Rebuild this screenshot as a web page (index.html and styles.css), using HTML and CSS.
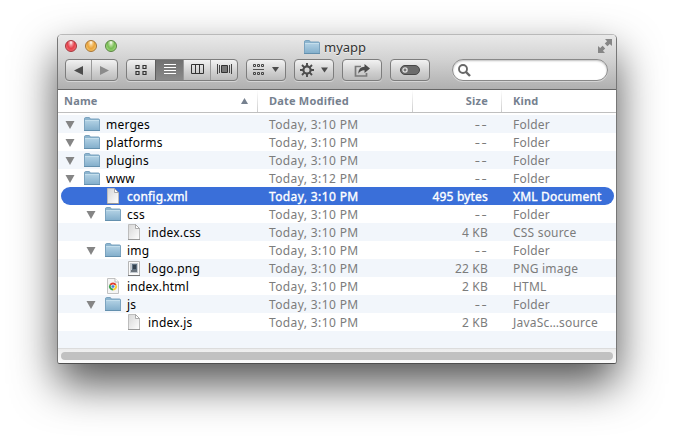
FILE: index.html
```
<!DOCTYPE html>
<html lang="en">
<head>
<meta charset="utf-8">
<title>myapp</title>
<link rel="stylesheet" href="styles.css">
</head>
<body>
<svg class="defs" width="0" height="0">
  <defs>
    <linearGradient id="gf" x1="0" y1="0" x2="0" y2="1"><stop offset="0" stop-color="#b3d2e5"/><stop offset="1" stop-color="#82aecb"/></linearGradient>
    <linearGradient id="gd" x1="0" y1="0" x2="1" y2="1"><stop offset="0" stop-color="#d6d6d6"/><stop offset="1" stop-color="#fff"/></linearGradient>
    <symbol id="folder" viewBox="0 0 16 15">
      <path d="M.5 13.5V2Q.5.5 1.5.5H5Q6 .5 6.2 2H14.5Q15.5 2 15.5 3V13.5Z" fill="#8db5cf" stroke="#7ba3bf"/>
      <path d="M1 3H15V13.5H1Z" fill="url(#gf)"/><path d="M1 3.5H15" stroke="#c4deec"/><path d="M0 13.5H16" stroke="#6490ae"/>
    </symbol>
    <symbol id="doc" viewBox="0 0 12 16">
      <path d="M.5.5H7.5L11.5 4.5V15.5H.5Z" fill="url(#gd)" stroke="#bdbdbd"/>
      <path d="M7.5.5V4.5H11.5Z" fill="#fff" stroke="#999" stroke-width=".8"/><path d="M0 15.5H12" stroke="#999"/>
    </symbol>
    <symbol id="image" viewBox="0 0 12 16">
      <path d="M.5 1.5H11.5V15.5H.5Z" fill="#fafafa" stroke="#b5b5b5"/><path d="M0 15.5H12" stroke="#777"/>
      <path d="M2 3H10V13H2Z" fill="#c4cad0"/><path d="M4 4H9V10H4Z" fill="#5d7080"/><path d="M5 5H8V9H5Z" fill="#34424f"/><path d="M3 10H9V12H3Z" fill="#6a737c"/>
    </symbol>
    <symbol id="html" viewBox="0 0 12 16">
      <path d="M.5.5H8L11.5 4V15.5H.5Z" fill="#f5f5f5" stroke="#c2c2c2"/><path d="M8 .5V4H11.5" fill="#fff" stroke="#aaa" stroke-width=".8"/>
      <path d="M6 8.5L2.5 6.5A4 4 0 0 1 9.5 6.5Z" fill="#de3a2c"/>
      <path d="M6 8.5L2.5 6.5A4 4 0 0 0 6 12.5Z" fill="#37a34a"/>
      <path d="M6 8.5V12.5A4 4 0 0 0 9.5 6.5Z" fill="#f7cf34"/>
      <circle cx="6" cy="8.5" r="1.8" fill="#3d7fdc" stroke="#fff" stroke-width=".7"/>
    </symbol>
    <symbol id="tri" viewBox="0 0 10 8"><path d="M.5 0H9.5L5 8Z" fill="#858585"/></symbol>
  </defs>
</svg>
<main class="window">
  <header class="chrome">
    <div class="titlebar">
      <div class="lights"><i class="light red"></i><i class="light yellow"></i><i class="light green"></i></div>
      <div class="title"><svg class="folder"><use href="#folder"/></svg><span>myapp</span></div>
      <svg class="fullscreen" viewBox="0 0 14 14"><path d="M7 0H14V7L11.8 4.9L9.4 7.2L6.8 4.6L9.1 2.2ZM0 7L2.2 9.1L4.6 6.8L7.2 9.4L4.9 11.8L7 14H0Z" fill="#868686"/></svg>
    </div>
    <div class="toolbar">
      <div class="group nav">
        <span class="seg"><svg width="9" height="9"><path d="M9 0V9L0 4.5Z" fill="#4c4c4c"/></svg></span>
        <span class="seg"><svg width="9" height="9"><path d="M0 0V9L9 4.5Z" fill="#8b8b8b"/></svg></span>
      </div>
      <div class="group views">
        <span class="seg"><svg width="12" height="11" fill="none" stroke="#333"><path d="M1 1.5H4V4.5H1ZM8 1.5H11V4.5H8ZM1 7.5H4V10.5H1ZM8 7.5H11V10.5H8Z" stroke-width="1.2"/></svg></span>
        <span class="seg on"><svg width="12" height="11" stroke="#fff"><path d="M0 .5H12M0 3.5H12M0 6.5H12M0 9.5H12"/></svg></span>
        <span class="seg"><svg width="13" height="11" fill="none" stroke="#333"><path d="M.5.5H12.5V9.5H.5ZM4.5 0V10M8.5 0V10"/></svg></span>
        <span class="seg"><svg width="15" height="11" stroke="#444"><path d="M.5 0V10M2.5 1V9M12.5 1V9M14.5 0V10"/><path d="M4.5 1.5H10.5V8.5H4.5Z" fill="#777" stroke="#333"/></svg></span>
      </div>
      <div class="group btn"><svg width="26" height="12"><path d="M.5.5H2.5V2.5H.5ZM4.5.5H6.5V2.5H4.5ZM8.5.5H10.5V2.5H8.5ZM.5 8.5H2.5V10.5H.5ZM4.5 8.5H6.5V10.5H4.5ZM8.5 8.5H10.5V10.5H8.5Z" fill="none" stroke="#444"/><path d="M0 5.5H11" stroke="#555"/><path d="M19 3H26L22.5 8Z" fill="#4c4c4c"/></svg></div>
      <div class="group btn"><svg width="28" height="14"><g stroke="#4c4c4c" fill="none"><circle cx="7" cy="7" r="3.6" stroke-width="2.2"/><path d="M7 0V3M7 11V14M0 7H3M11 7H14M2 2L4.3 4.3M9.7 9.7L12 12M12 2L9.7 4.3M4.3 9.7L2 12" stroke-width="1.9"/></g><path d="M21 4.5H28L24.5 9.5Z" fill="#4c4c4c"/></svg></div>
      <div class="group btn"><svg width="16" height="13"><path d="M7 2.5H1.5V12H12.5V9" fill="none" stroke="#7a7a7a" stroke-width="1.7"/><path d="M10.5 0L16 4.5L10.5 9V6.2Q6.5 6 4.3 9.7Q4.4 3 10.5 2.8Z" fill="#4c4c4c"/></svg></div>
      <div class="group btn"><svg width="20" height="10"><rect x=".5" y=".5" width="19" height="9" rx="4.5" fill="#6c6c6c" stroke="#484848"/><circle cx="5" cy="5" r="2.1" fill="#777" stroke="#e2e2e2" stroke-width="1.3"/></svg></div>
      <div class="search"><svg width="13" height="13" fill="none" stroke="#686868"><circle cx="5" cy="5" r="4" stroke-width="1.9"/><path d="M8 8L12 12" stroke-width="2.4"/></svg></div>
    </div>
  </header>
  <div class="heads">
    <div class="h-name"><span>Name</span><svg width="7" height="6"><path d="M3.5 0L7 6H0Z" fill="#76818f"/></svg></div>
    <div class="h-date">Date Modified</div><div class="h-size">Size</div><div class="h-kind">Kind</div>
  </div>
  <div class="list">
    <div class="row"><div class="name"><svg class="tri"><use href="#tri"/></svg><svg class="folder"><use href="#folder"/></svg><span>merges</span></div><span class="date">Today, 3:10 PM</span><span class="size none">--</span><span>Folder</span></div>
    <div class="row"><div class="name"><svg class="tri"><use href="#tri"/></svg><svg class="folder"><use href="#folder"/></svg><span>platforms</span></div><span class="date">Today, 3:10 PM</span><span class="size none">--</span><span>Folder</span></div>
    <div class="row"><div class="name"><svg class="tri"><use href="#tri"/></svg><svg class="folder"><use href="#folder"/></svg><span>plugins</span></div><span class="date">Today, 3:10 PM</span><span class="size none">--</span><span>Folder</span></div>
    <div class="row"><div class="name"><svg class="tri"><use href="#tri"/></svg><svg class="folder"><use href="#folder"/></svg><span>www</span></div><span class="date">Today, 3:12 PM</span><span class="size none">--</span><span>Folder</span></div>
    <div class="row selected"><div class="name l1"><i class="tri"></i><svg class="file"><use href="#doc"/></svg><span>config.xml</span></div><span class="date">Today, 3:10 PM</span><span class="size">495 bytes</span><span>XML Document</span></div>
    <div class="row"><div class="name l1"><svg class="tri"><use href="#tri"/></svg><svg class="folder"><use href="#folder"/></svg><span>css</span></div><span class="date">Today, 3:10 PM</span><span class="size none">--</span><span>Folder</span></div>
    <div class="row"><div class="name l2"><i class="tri"></i><svg class="file"><use href="#doc"/></svg><span>index.css</span></div><span class="date">Today, 3:10 PM</span><span class="size">4 KB</span><span>CSS source</span></div>
    <div class="row"><div class="name l1"><svg class="tri"><use href="#tri"/></svg><svg class="folder"><use href="#folder"/></svg><span>img</span></div><span class="date">Today, 3:10 PM</span><span class="size none">--</span><span>Folder</span></div>
    <div class="row"><div class="name l2"><i class="tri"></i><svg class="file"><use href="#image"/></svg><span>logo.png</span></div><span class="date">Today, 3:10 PM</span><span class="size">22 KB</span><span>PNG image</span></div>
    <div class="row"><div class="name l1"><i class="tri"></i><svg class="file"><use href="#html"/></svg><span>index.html</span></div><span class="date">Today, 3:10 PM</span><span class="size">2 KB</span><span>HTML</span></div>
    <div class="row"><div class="name l1"><svg class="tri"><use href="#tri"/></svg><svg class="folder"><use href="#folder"/></svg><span>js</span></div><span class="date">Today, 3:10 PM</span><span class="size none">--</span><span>Folder</span></div>
    <div class="row"><div class="name l2"><i class="tri"></i><svg class="file"><use href="#doc"/></svg><span>index.js</span></div><span class="date">Today, 3:10 PM</span><span class="size">2 KB</span><span>JavaSc…source</span></div>
    <div class="row blank"></div>
  </div>
  <div class="scroller"><div class="thumb"></div></div>
</main>
</body>
</html>
```
FILE: styles.css
```
* { box-sizing: border-box; }
body {
  margin: 0;
  padding: 34px 57px;
  height: 442px;
  overflow: hidden;
  background: #fff;
  font: 12px/20px "Noto Sans", "Open Sans", sans-serif;
  letter-spacing: 0.2px;
}
svg { display: block; flex: none; }
.defs { position: absolute; }
.window {
  width: 560px;
  height: 330px;
  border: 1px solid;
  border-color: #b9b9b9 #777 #4e4e4e #777;
  border-radius: 5px 5px 3px 3px;
  background: #fff;
  overflow: hidden;
  display: flex;
  flex-direction: column;
  box-shadow: 0 20px 44px rgba(0, 0, 0, 0.68);
}
.chrome {
  height: 55px;
  background: linear-gradient(#e9e9e9, #d2d2d2 45%, #b0b0b0);
  border-bottom: 1px solid #666;
}
.titlebar {
  height: 24px;
  padding: 0 4px 0 7px;
  display: grid;
  grid-template-columns: 60px 1fr 14px;
  align-items: center;
}
.lights { display: flex; gap: 8px; padding-bottom: 2px; }
.light { width: 12px; height: 12px; border-radius: 50%; border: 1px solid; }
.red { background: radial-gradient(ellipse at 50% 15%, #fff 0, #f3939a 22%, #e6404a 50%, #f98a8e 100%); border-color: #a5353b; }
.yellow { background: radial-gradient(ellipse at 50% 15%, #fff 0, #f7cd85 22%, #eba33b 50%, #fbe08c 100%); border-color: #a87434; }
.green { background: radial-gradient(ellipse at 50% 15%, #fff 0, #b8dd9c 22%, #77bd53 50%, #c0ef9c 100%); border-color: #58843f; }
.title {
  display: flex;
  align-items: center;
  gap: 4px;
  padding-left: 179px;
  font-size: 13px;
  letter-spacing: 0;
  color: #333;
  text-shadow: 0 1px 0 rgba(255, 255, 255, 0.6);
}
.fullscreen { width: 14px; height: 14px; margin-bottom: 2px; }
.toolbar { display: flex; gap: 8px; padding: 0 8px 0 7px; }
.group {
  height: 22px;
  display: flex;
  border: 1px solid #7d7d7d;
  border-radius: 4px;
  background: linear-gradient(#f2f2f2, #cfcfcf 60%, #bcbcbc);
  box-shadow: 0 1px 0 rgba(255, 255, 255, 0.4);
  overflow: hidden;
}
.seg { flex: 1; display: flex; align-items: center; justify-content: center; }
.seg + .seg { border-left: 1px solid #999; }
.nav { width: 53px; }
.views { width: 112px; }
.views .seg:first-child { flex: 0 0 28px; }
.views .seg { padding-bottom: 1px; }
.views .on { flex: 0 0 28px; background: linear-gradient(#707070, #8a8a8a); border-color: #5d5d5d; }
.btn { width: 40px; align-items: center; justify-content: center; }
.search {
  margin-left: auto;
  width: 156px;
  height: 22px;
  padding-left: 5px;
  display: flex;
  align-items: center;
  border: 1px solid #898989;
  border-radius: 11px;
  background: #fff;
  box-shadow: inset 0 1px 2px rgba(0, 0, 0, 0.25), 0 1px 0 rgba(255, 255, 255, 0.4);
}
.heads {
  height: 23px;
  display: grid;
  grid-template-columns: 199px 155px 89px 1fr;
  border-bottom: 1px solid #bfbfbf;
  font-weight: 700;
  font-size: 11px;
  line-height: 22px;
  color: #76818f;
}
.heads > div + div {
  background: linear-gradient(#fff, #ccc) left / 1px 100% no-repeat;
}
.h-name { display: flex; align-items: center; justify-content: space-between; padding: 0 9px 0 6px; }
.h-date, .h-kind { padding-left: 12px; }
.h-size { text-align: right; padding-right: 13px; }
.list { padding-top: 2px; height: 235px; }
.row {
  height: 18px;
  display: grid;
  grid-template-columns: 211px 120px 99px 1fr;
  color: #7c7c7c;
  white-space: nowrap;
}
.row:nth-child(odd) { background: #f2f6fb; }
.row > span:last-child { padding-left: 25px; }
.date { letter-spacing: 0.38px; }
.size { text-align: right; }
.none { letter-spacing: 1px; transform: scaleX(1.35); transform-origin: right; }
.blank { height: 17px; }
.name { display: flex; align-items: center; height: 18px; padding-left: 7px; color: #000; }
.l1 { padding-left: 28px; }
.l2 { padding-left: 49px; }
.tri { width: 10px; height: 8px; margin: 1px 9px 0 0; }
.folder { width: 16px; height: 15px; }
.file { width: 12px; height: 16px; margin: 0 2px; }
.name span { margin: 2px 0 0 6px; }
.row.selected {
  margin: 0 2px 0 3px;
  grid-template-columns: 208px 120px 99px 1fr;
  border-radius: 9px;
  background: #3a6fd9;
  color: #fff;
  -webkit-text-stroke: 0.35px #fff;
}
.selected .name { color: #fff; padding-left: 25px; }
.scroller { height: 15px; padding: 3px; border-top: 1px solid #dcdcdc; background: linear-gradient(#ececec, #fbfbfb); }
.thumb { height: 8px; border-radius: 4px; background: #c1c1c1; }
```
